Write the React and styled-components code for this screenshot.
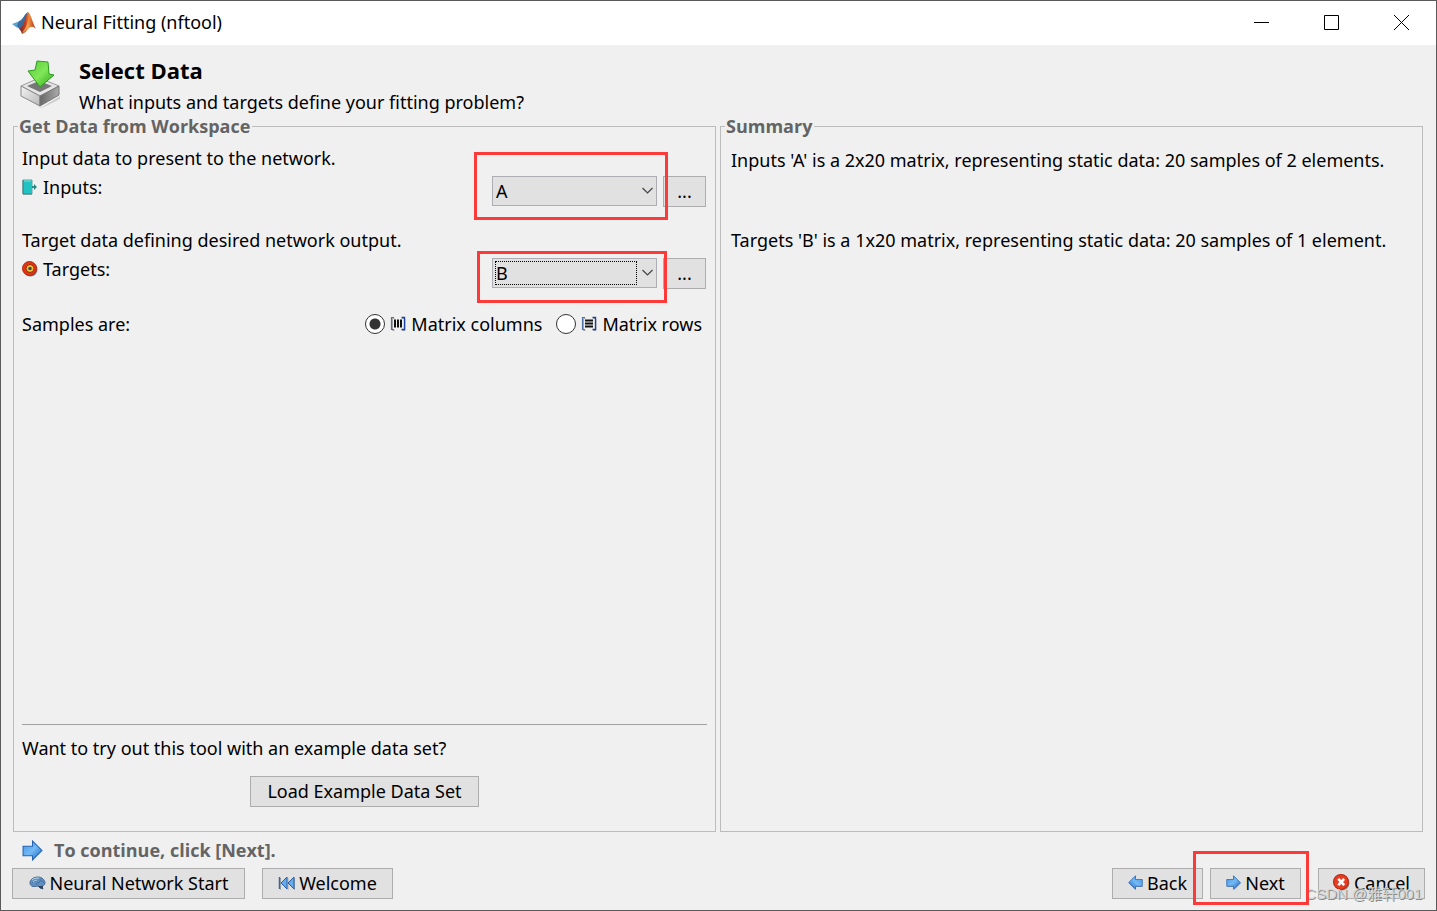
import React from "react";
import styled, { createGlobalStyle, css } from "styled-components";

const GlobalStyle = createGlobalStyle`
  *, *::before, *::after { box-sizing: border-box; }
  body { margin: 0; background: #f0f0f0; }
  body, button, select, input {
    font-family: "Noto Sans", "Noto Sans CJK SC", sans-serif;
    font-size: 18px;
    line-height: 24px;
    color: #000;
  }
`;

const boldFont = css`
  font-family: "Open Sans", "Noto Sans", sans-serif;
  font-weight: 700;
`;

const Window = styled.div`
  min-height: 100vh;
  display: flex;
  flex-direction: column;
  background: #f0f0f0;
  border: 1px solid #5a5a5a;
`;

const TitleBar = styled.header`
  display: flex;
  align-items: center;
  height: 44px;
  padding-left: 11px;
  background: #fff;
`;

const WindowTitle = styled.span`
  flex: 1;
  margin-left: 4px;
  padding-bottom: 2px;
`;

const CaptionButton = styled.button`
  width: 70px;
  height: 44px;
  padding: 0 0 2px;
  border: 0;
  background: transparent;
  display: flex;
  align-items: center;
  justify-content: center;
`;

const PageHeader = styled.div`
  display: flex;
  gap: 18px;
  padding: 11px 18px 0;
`;

const HeaderIcon = styled.div`
  width: 42px;
  padding-top: 4px;
`;

const PageTitle = styled.h1`
  ${boldFont}
  margin: 0;
  font-size: 22px;
  line-height: 28px;
`;

const PageSubtitle = styled.p`
  margin: 6px 0 0;
`;

const Panels = styled.main`
  flex: 1;
  display: grid;
  grid-template-columns: 1fr 1fr;
  gap: 4px;
  padding: 0 13px 0 12px;
`;

const Panel = styled.fieldset`
  display: flex;
  flex-direction: column;
  min-width: 0;
  margin: 0;
  padding: ${(p) => p.$pad};
  border: 1px solid #bcbcbc;
`;

const PanelTitle = styled.legend`
  ${boldFont}
  margin-left: ${(p) => p.$indent};
  padding: 0 2px 0 1px;
  color: #646464;
`;

const Text = styled.p`
  margin: 0;
`;

const SummaryText = styled(Text)`
  margin-bottom: 56px;
`;

const DataField = styled.div`
  margin-bottom: 21px;
`;

const FieldRow = styled.div`
  display: flex;
  align-items: flex-start;
  margin-top: 6px;
  padding-right: 1px;
`;

const IconLabel = styled.label`
  flex: 1;
  display: flex;
  align-items: center;
  gap: 5px;
  line-height: 22px;
`;

const SelectBox = styled.div`
  position: relative;
  width: 165px;
  height: 31px;
  margin-right: 6px;

  > svg {
    position: absolute;
    top: 10px;
    right: 3px;
    pointer-events: none;
  }
`;

const Select = styled.select`
  appearance: none;
  display: block;
  width: 100%;
  height: 30px;
  padding: 0 24px 0 3px;
  border: 1px solid #adadb3;
  border-radius: 0;
  background: #e1e1e1;
  outline: none;
`;

const FocusRing = styled.span`
  position: absolute;
  inset: 3px 20px 4px 3px;
  border: 1px dotted #000;
  pointer-events: none;
`;

const Highlight = styled.span`
  position: absolute;
  z-index: 1;
  inset: ${(p) => p.$inset};
  border: 3px solid #fd3a3a;
  pointer-events: none;
`;

const Button = styled.button`
  position: relative;
  display: flex;
  align-items: center;
  justify-content: center;
  gap: 4px;
  flex: none;
  width: ${(p) => p.$width};
  height: 31px;
  padding: 0 0 2px;
  border: 1px solid #adadad;
  background: #e1e1e1;
  white-space: nowrap;
`;

const BrowseButton = styled(Button)`
  width: 43px;
`;

const SampleRow = styled.div`
  display: flex;
  align-items: center;
  margin-top: 2px;
  padding-right: 5px;
`;

const RadioGroup = styled.div`
  display: flex;
  gap: 14px;
  margin-left: auto;
`;

const RadioLabel = styled.label`
  display: flex;
  align-items: center;
  gap: 5px;
`;

const Radio = styled.input`
  appearance: none;
  width: 20px;
  height: 20px;
  margin: 0;
  border: 1px solid #333;
  border-radius: 50%;
  background: #fff;

  &:checked {
    background: radial-gradient(circle, #333 5px, #fff 6px);
  }
`;

const Example = styled.section`
  display: flex;
  flex-direction: column;
  gap: 16px;
  margin-top: auto;
  padding-top: 11px;
  border-top: 1px solid #a0a0a0;

  > button { align-self: center; }
`;

const Hint = styled.div`
  ${boldFont}
  display: flex;
  align-items: center;
  gap: 11px;
  padding: 6px 21px 0;
  color: #646464;
`;

const Footer = styled.footer`
  position: relative;
  display: flex;
  padding: 6px 11px 11px;
`;

const ButtonGroup = styled.div`
  display: flex;
  gap: ${(p) => p.$gap};
  ${(p) => p.$end && css`margin-left: auto;`}
`;

const CancelSlot = styled.div`
  margin-left: 10px;
`;

const Watermark = styled.span`
  position: absolute;
  right: 14px;
  bottom: 6px;
  font: 15px/20px "Liberation Sans", "Noto Sans CJK SC", sans-serif;
  color: rgba(215, 215, 215, 0.85);
  text-shadow: 1px 1px 0 #8a8a8a;
  pointer-events: none;
`;

const MatlabLogo = () => (
  <svg width="25" height="24" viewBox="0 0 25 24" aria-hidden="true">
    <defs>
      <linearGradient id="peak" x1="0" x2="1">
        <stop offset="0" stopColor="#6e2a35" />
        <stop offset="0.4" stopColor="#c9401c" />
        <stop offset="0.6" stopColor="#f08a3c" />
        <stop offset="1" stopColor="#a82a18" />
      </linearGradient>
    </defs>
    <path d="M0 13L8 10l4 4-4 4-4-2z" fill="#5ba3cf" />
    <path d="M7 10c4-1 5-7 9-9l-3 11-5 6-3-3z" fill="#3c6d9c" />
    <path d="M16 1c3 2 5 12 8 17-3-3-5-3-8 0-2 2-3 4-6 5-1-2-1-4-3-5 5-3 6-11 9-17z" fill="url(#peak)" />
    <path d="M16 2c1 5 0 12-6 20 4-1 5-5 7-5-1-5 0-10-1-15z" fill="#f9b35c" opacity=".75" />
  </svg>
);

const ImportIcon = () => (
  <svg width="42" height="48" viewBox="0 0 42 48" aria-hidden="true">
    <defs>
      <linearGradient id="arrowGreen" x1="0" y1="0" x2="1" y2="1">
        <stop offset="0" stopColor="#59c83a" />
        <stop offset="0.5" stopColor="#80e858" />
        <stop offset="1" stopColor="#29a614" />
      </linearGradient>
      <linearGradient id="trayLeft" x1="0" y1="0" x2="1" y2="1">
        <stop offset="0" stopColor="#f4f4f4" />
        <stop offset="1" stopColor="#b8b8b8" />
      </linearGradient>
      <linearGradient id="trayRight" x1="0" y1="0" x2="1" y2="0">
        <stop offset="0" stopColor="#686868" />
        <stop offset="1" stopColor="#aaa" />
      </linearGradient>
    </defs>
    <path d="M2 34L22 48 41 36v3L23 48z" fill="#999" opacity=".4" />
    <path d="M2 26L20 18l20 8-19 10z" fill="#e6e6e6" stroke="#999" strokeLinejoin="round" />
    <path d="M8 26l12-5 13 5-12 6z" fill="#777" />
    <path d="M2 26l19 10v10L2 36z" fill="url(#trayLeft)" stroke="#888" strokeLinejoin="round" />
    <path d="M40 26l-19 10v10l19-11z" fill="url(#trayRight)" stroke="#777" strokeLinejoin="round" />
    <path d="M18 1l11 1 1 12 5 1-14 12L9 11l7-1z" fill="url(#arrowGreen)" stroke="#2b9d1c" strokeLinejoin="round" />
  </svg>
);

const InputIcon = () => (
  <svg width="16" height="16" viewBox="0 0 16 16" aria-hidden="true">
    <path d="M1 1h9v14H1z" fill="#20c2c2" stroke="#6aa09e" />
    <path d="M1 1v14h9" fill="none" stroke="#447b7b" />
    <path d="M2 2h7" stroke="#79e0de" />
    <path d="M10 7h2V5l3 3-3 3V9h-2z" fill="#258b87" />
  </svg>
);

const TargetIcon = () => (
  <svg width="16" height="16" viewBox="0 0 16 16" aria-hidden="true">
    <circle cx="8.500" cy="8.500" r="7" fill="#777" />
    <circle cx="7.500" cy="7.500" r="7" fill="#e93012" stroke="#b22a12" />
    <circle cx="8" cy="7.500" r="4" fill="#f4c52b" stroke="#8c2810" />
    <circle cx="8" cy="7.500" r="1.800" fill="#3b4960" />
  </svg>
);

const MatrixIcon = ({ rows }) => (
  <svg width="16" height="16" viewBox="0 0 16 16" aria-hidden="true">
    <path d="M4.500 2.500h-2v12h2M12 2.500h3v12h-3" fill="none" stroke="#aaa" />
    <path d="M4 1.500H1.500v12H4" fill="none" stroke="#4d70a9" strokeWidth="1.200" />
    <path d="M11.500 1.500h3v12h-3" fill="none" stroke="#1940a4" strokeWidth="1.300" />
    {rows ? (
      <path d="M4 4.500h8M4 7.500h8M4 10.500h8" stroke="#111" strokeWidth="1.800" />
    ) : (
      <path d="M5 3.500v8M8 3.500v8M11 3.500v8" stroke="#111" strokeWidth="2" />
    )}
  </svg>
);

const ArrowIcon = ({ size = 15, left }) => (
  <svg width={size} height={size} viewBox="0 0 20 20" aria-hidden="true">
    <defs>
      <linearGradient id="arrowBlue" x1="0" y1="0" x2="1" y2="1">
        <stop offset="0" stopColor="#4697e6" />
        <stop offset="0.5" stopColor="#72b9f5" />
        <stop offset="1" stopColor="#1761bd" />
      </linearGradient>
    </defs>
    {size < 20 && (
      <path
        d="M2 7h9V2l9 9-9 9v-4H2z"
        fill="#777"
        opacity=".6"
        transform={left ? "matrix(-1 0 0 1 21 0)" : undefined}
      />
    )}
    <g transform={left ? "matrix(-1 0 0 1 20 0)" : undefined}>
      <path d="M1 6h9V1l9 9-9 9v-4H1z" fill="url(#arrowBlue)" stroke="#2463b4" />
    </g>
  </svg>
);

const BrainIcon = () => (
  <svg width="17" height="14" viewBox="0 0 17 14" aria-hidden="true">
    <path d="M1 7C1 3 5 1 9 1c4 0 7 3 7 6 0 2-2 3-3 3l1 3-3-1-2-2C6 11 1 11 1 7z" fill="#5f90c0" stroke="#4a6c92" />
    <path d="M3 7c2-3 3 0 5-3M7 9c0-3 3-1 4-4M11 3c0 3 3 1 4 4" fill="none" stroke="#3d6797" strokeWidth=".8" />
    <path d="M3 4c2-2 4-2 7-2M4 6c2-2 3-1 4-2" fill="none" stroke="#b7d8ee" />
    <path d="M9 10l5 0v3l-3-1z" fill="#31435c" />
  </svg>
);

const RewindIcon = () => (
  <svg width="17" height="14" viewBox="0 0 17 14" aria-hidden="true">
    <path d="M2.500 2v12M10 2v12M16.500 2v12" stroke="#888" opacity=".6" />
    <path d="M1.500 1v12" stroke="#3b659f" strokeWidth="1.500" />
    <path d="M9 1v12L3 7zM16 1v12l-6-6z" fill="#66aceb" stroke="#285ca2" />
  </svg>
);

const CancelIcon = () => (
  <svg width="17" height="17" viewBox="0 0 16 16" aria-hidden="true">
    <circle cx="8.500" cy="8.500" r="7" fill="#888" />
    <circle cx="7.500" cy="7.500" r="7" fill="#e63c22" stroke="#bb2411" />
    <path d="M5 4.500l5.500 6M10.500 4.500l-5.500 6" stroke="#fff" strokeWidth="2.500" />
  </svg>
);

const Chevron = () => (
  <svg width="13" height="9" viewBox="0 0 13 9" aria-hidden="true">
    <path d="M1.500 2l5 5 5-5" fill="none" stroke="#444" strokeWidth="1.200" />
  </svg>
);

function Field({ id, hint, label, icon, value, focused, highlight }) {
  return (
    <DataField>
      <Text>{hint}</Text>
      <FieldRow>
        <IconLabel htmlFor={id}>{icon}{label}</IconLabel>
        <SelectBox>
          <Select id={id} defaultValue={value}>
            <option>A</option>
            <option>B</option>
          </Select>
          <Chevron />
          {focused && <FocusRing />}
          <Highlight $inset={highlight} />
        </SelectBox>
        <BrowseButton type="button">...</BrowseButton>
      </FieldRow>
    </DataField>
  );
}

export default function App() {
  return (
    <>
      <GlobalStyle />
      <Window>
        <TitleBar>
          <MatlabLogo />
          <WindowTitle>Neural Fitting (nftool)</WindowTitle>
          <CaptionButton type="button" aria-label="Minimize">
            <svg width="15" height="15"><path d="M0 7.500h15" stroke="#000" /></svg>
          </CaptionButton>
          <CaptionButton type="button" aria-label="Maximize">
            <svg width="15" height="15"><path d="M.5.500h14v14H.5z" fill="none" stroke="#000" /></svg>
          </CaptionButton>
          <CaptionButton type="button" aria-label="Close">
            <svg width="15" height="15"><path d="M0 0l15 15M15 0L0 15" stroke="#000" /></svg>
          </CaptionButton>
        </TitleBar>

        <PageHeader>
          <HeaderIcon><ImportIcon /></HeaderIcon>
          <div>
            <PageTitle>Select Data</PageTitle>
            <PageSubtitle>What inputs and targets define your fitting problem?</PageSubtitle>
          </div>
        </PageHeader>

        <Panels>
          <Panel $pad="8px 8px 24px">
            <PanelTitle $indent="-4px">Get Data from Workspace</PanelTitle>
            <Field
              id="inputs"
              hint="Input data to present to the network."
              label="Inputs:"
              icon={<InputIcon />}
              value="A"
              highlight="-24px -11px -13px -18px"
            />
            <Field
              id="targets"
              hint="Target data defining desired network output."
              label="Targets:"
              icon={<TargetIcon />}
              value="B"
              focused
              highlight="-7px -10px -14px -15px"
            />
            <SampleRow>
              <span>Samples are:</span>
              <RadioGroup>
                <RadioLabel>
                  <Radio type="radio" name="samples" defaultChecked />
                  <MatrixIcon />
                  Matrix columns
                </RadioLabel>
                <RadioLabel>
                  <Radio type="radio" name="samples" />
                  <MatrixIcon rows />
                  Matrix rows
                </RadioLabel>
              </RadioGroup>
            </SampleRow>
            <Example>
              <Text>Want to try out this tool with an example data set?</Text>
              <Button type="button" $width="229px">Load Example Data Set</Button>
            </Example>
          </Panel>

          <Panel $pad="10px 10px 24px">
            <PanelTitle $indent="-6px">Summary</PanelTitle>
            <SummaryText>Inputs 'A' is a 2x20 matrix, representing static data: 20 samples of 2 elements.</SummaryText>
            <Text>Targets 'B' is a 1x20 matrix, representing static data: 20 samples of 1 element.</Text>
          </Panel>
        </Panels>

        <Hint>
          <ArrowIcon size={21} />
          To continue, click [Next].
        </Hint>
        <Footer>
          <ButtonGroup $gap="17px">
            <Button type="button" $width="233px"><BrainIcon />Neural Network Start</Button>
            <Button type="button" $width="131px"><RewindIcon />Welcome</Button>
          </ButtonGroup>
          <ButtonGroup $gap="7px" $end>
            <Button type="button" $width="91px"><ArrowIcon left />Back</Button>
            <Button type="button" $width="91px">
              <ArrowIcon />Next
              <Highlight $inset="-18px -9px -7px -18px" />
            </Button>
            <CancelSlot>
              <Button type="button" $width="107px"><CancelIcon />Cancel</Button>
            </CancelSlot>
          </ButtonGroup>
          <Watermark>CSDN @雅轩001</Watermark>
        </Footer>
      </Window>
    </>
  );
}
